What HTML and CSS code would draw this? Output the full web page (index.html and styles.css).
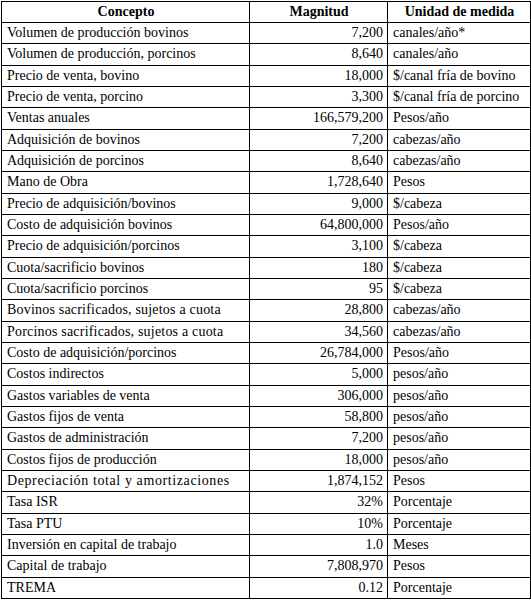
FILE: index.html
```html
<!DOCTYPE html>
<html lang="es">
<head>
<meta charset="utf-8">
<title>Tabla</title>
<link rel="stylesheet" href="styles.css">
</head>
<body>
<table class="data">
<colgroup><col class="c1"><col class="c2"><col class="c3"></colgroup>
<thead>
<tr><th>Concepto</th><th>Magnitud</th><th>Unidad de medida</th></tr>
</thead>
<tbody>
<tr><td>Volumen de producción bovinos</td><td class="num">7,200</td><td>canales/año*</td></tr>
<tr><td>Volumen de producción, porcinos</td><td class="num">8,640</td><td>canales/año</td></tr>
<tr><td>Precio de venta, bovino</td><td class="num">18,000</td><td>$/canal fría de bovino</td></tr>
<tr><td>Precio de venta, porcino</td><td class="num">3,300</td><td>$/canal fría de porcino</td></tr>
<tr><td>Ventas anuales</td><td class="num">166,579,200</td><td>Pesos/año</td></tr>
<tr><td>Adquisición de bovinos</td><td class="num">7,200</td><td>cabezas/año</td></tr>
<tr><td>Adquisición de porcinos</td><td class="num">8,640</td><td>cabezas/año</td></tr>
<tr><td>Mano de Obra</td><td class="num">1,728,640</td><td>Pesos</td></tr>
<tr><td>Precio de adquisición/bovinos</td><td class="num">9,000</td><td>$/cabeza</td></tr>
<tr><td>Costo de adquisición bovinos</td><td class="num">64,800,000</td><td>Pesos/año</td></tr>
<tr><td>Precio de adquisición/porcinos</td><td class="num">3,100</td><td>$/cabeza</td></tr>
<tr><td>Cuota/sacrificio bovinos</td><td class="num">180</td><td>$/cabeza</td></tr>
<tr><td>Cuota/sacrificio porcinos</td><td class="num">95</td><td>$/cabeza</td></tr>
<tr><td class="spaced">Bovinos sacrificados, sujetos a cuota</td><td class="num">28,800</td><td>cabezas/año</td></tr>
<tr><td class="spaced">Porcinos sacrificados, sujetos a cuota</td><td class="num">34,560</td><td>cabezas/año</td></tr>
<tr><td>Costo de adquisición/porcinos</td><td class="num">26,784,000</td><td>Pesos/año</td></tr>
<tr><td>Costos indirectos</td><td class="num">5,000</td><td>pesos/año</td></tr>
<tr><td>Gastos variables de venta</td><td class="num">306,000</td><td>pesos/año</td></tr>
<tr><td>Gastos fijos de venta</td><td class="num">58,800</td><td>pesos/año</td></tr>
<tr><td>Gastos de administración</td><td class="num">7,200</td><td>pesos/año</td></tr>
<tr><td>Costos fijos de producción</td><td class="num">18,000</td><td>pesos/año</td></tr>
<tr><td class="wide">Depreciación total y amortizaciones</td><td class="num">1,874,152</td><td>Pesos</td></tr>
<tr><td>Tasa ISR</td><td class="num">32%</td><td>Porcentaje</td></tr>
<tr><td>Tasa PTU</td><td class="num">10%</td><td>Porcentaje</td></tr>
<tr><td>Inversión en capital de trabajo</td><td class="num">1.0</td><td>Meses</td></tr>
<tr><td>Capital de trabajo</td><td class="num">7,808,970</td><td>Pesos</td></tr>
<tr><td>TREMA</td><td class="num">0.12</td><td>Porcentaje</td></tr>
</tbody>
</table>
</body>
</html>
```

FILE: styles.css
```css
html, body {
  margin: 0;
  padding: 0;
  background: #ffffff;
}
body {
  padding: 1px 0 0 1px;
  font-family: "Liberation Serif", "Times New Roman", serif;
  font-size: 14px;
  color: #000;
}
.data {
  border-collapse: collapse;
  table-layout: fixed;
  width: 529px;
}
.c1 { width: 248px; }
.c2 { width: 138px; }
.c3 { width: 143px; }
.data th,
.data td {
  border: 1px solid #000;
  padding: 0 4px 0 5px;
  height: 20.33px;
  line-height: 16px;
  white-space: nowrap;
  overflow: hidden;
  text-align: left;
  vertical-align: middle;
}
.data th {
  height: 20px;
  font-weight: bold;
  text-align: center;
}
.data td.num {
  text-align: right;
  padding-right: 4px;
}
.data td.spaced {
  letter-spacing: 0.2px;
}
.data td.wide {
  letter-spacing: 0.6px;
}
```
